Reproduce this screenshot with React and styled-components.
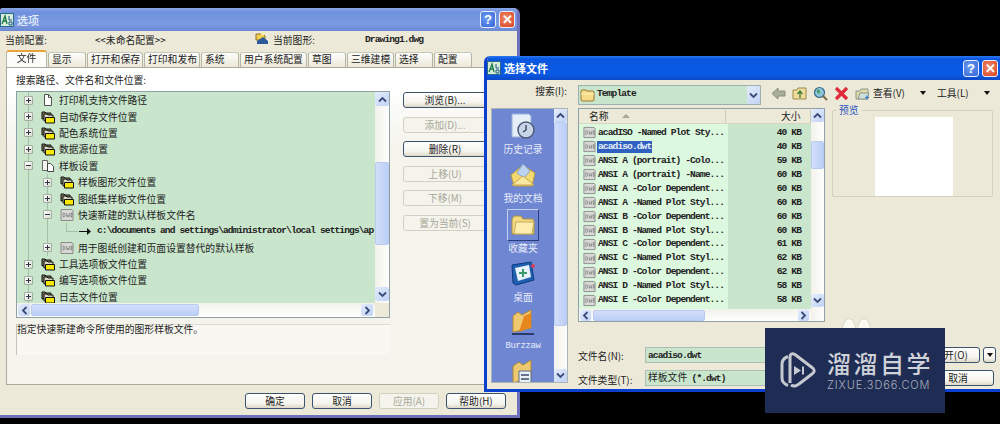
import React from 'react'
import styled, { createGlobalStyle, css } from 'styled-components'

const cjk = `"Noto Sans CJK SC", "Liberation Sans", sans-serif`
const mono = `"Liberation Mono", "Noto Sans CJK SC", monospace`

const bitmapText = css`
  font-family: ${mono};
  font-size: 9.6px;
  font-weight: 700;
  letter-spacing: -0.91px;
`

const GlobalStyle = createGlobalStyle`
  html, body { margin: 0; padding: 0; background: #000; overflow: hidden; }
  * { box-sizing: border-box; }
`

const Page = styled.div`
  position: relative;
  width: 1000px;
  height: 424px;
  background: #000;
  overflow: hidden;
  font-family: ${cjk};
  font-size: 9.8px;
  color: #222;
`
const Desktop = styled.div`
  position: absolute;
  inset: 0;
  filter: blur(0.4px);
`
const Win = styled.div`
  position: absolute;
  display: flex;
  flex-direction: column;
  left: ${p => p.$left}px;
  top: ${p => p.$top}px;
  width: ${p => p.$width}px;
  height: ${p => p.$height}px;
  background: #ece9d8;
  border: 3px solid ${p => p.$border};
  border-top: 0;
  border-radius: 6px 6px 0 0;
  overflow: hidden;
`
const TitleBar = styled.div`
  flex: none;
  height: ${p => p.$h}px;
  display: flex;
  align-items: center;
  gap: 3px;
  padding-right: ${p => p.$pr}px;
  background: ${p => p.$active
    ? 'linear-gradient(#2a7af0 0, #0a56e0 3px, #0a5ae6 18px, #0a48c8 100%)'
    : 'linear-gradient(#8aa6e8 0, #6f90dc 4px, #7c9ce2 16px, #6a88d4 100%)'};
`
const TitleText = styled.span`
  flex: 1;
  color: ${p => p.$active ? '#fff' : '#e4ecfa'};
  font-size: 11px;
  font-weight: ${p => p.$active ? 700 : 500};
`
const CapButton = styled.span`
  width: 16px;
  height: 17px;
  display: flex;
  align-items: center;
  justify-content: center;
  border: 1px solid #e8eefc;
  border-radius: 3px;
  color: #fff;
  font: 700 13px "Liberation Sans", sans-serif;
  background: ${p => p.$close
    ? 'radial-gradient(circle at 40% 40%, #f0886a, #d8431f)'
    : 'radial-gradient(circle at 40% 40%, #6c9cf0, #3465d8)'};
`

const ConfigRow = styled.div`
  flex: none;
  height: 20px;
  display: flex;
  align-items: center;
  padding: 0 0 3px 5px;
`
const Cell = styled.span`
  flex: none;
  width: ${p => p.$w}px;
  ${p => p.$mono && bitmapText}
`
const TabRow = styled.div`
  flex: none;
  display: flex;
  align-items: flex-end;
  gap: 1px;
  height: 16px;
  margin-left: 6px;
`
const Tab = styled.div`
  width: ${p => p.$w}px;
  height: ${p => p.$active ? 17 : 15}px;
  line-height: ${p => p.$active ? 12 : 13}px;
  padding-left: ${p => p.$active ? 0 : 3}px;
  text-align: ${p => p.$active ? 'center' : 'left'};
  border: 1px solid #b4b7a6;
  border-bottom: 0;
  border-top: ${p => p.$active ? '2px solid #e8a33c' : '1px solid #c8c9b8'};
  border-radius: 3px 3px 0 0;
  background: ${p => p.$active ? '#fcfcf8' : 'linear-gradient(#fdfdfb, #ece9d8)'};
  position: relative;
  z-index: ${p => p.$active ? 1 : 0};
`
const TabPane = styled.div`
  flex: none;
  height: 318px;
  margin: 0 0 0 6px;
  padding: 6px 0 0 9px;
  border: 1px solid #a8aa9c;
  background: linear-gradient(#fff 20px, #f4f3ec 80px);
`
const PaneLabel = styled.div`
  height: 13px;
  line-height: 13px;
  margin-bottom: 4px;
`
const PaneBody = styled.div`
  display: flex;
  gap: 13px;
`
const TreeColumn = styled.div`
  flex: none;
  width: 374px;
`
const TreeBox = styled.div`
  height: 227px;
  display: grid;
  grid-template-columns: 358px 15px;
  grid-template-rows: 211px 14px;
  border: 1px solid #8fa0a6;
  background: #c9e6cc;
  overflow: hidden;
`
const TreeRows = styled.div`
  overflow: hidden;
`
const TreeRow = styled.div`
  height: 16.4px;
  display: flex;
  align-items: center;
  padding-left: ${p => 7 + p.$level * 19}px;
  white-space: nowrap;
  background:
    ${p => p.$guide1 ? 'linear-gradient(#a6bfa9, #a6bfa9) no-repeat 11px 0 / 1px 100%,' : ''}
    ${p => p.$guide2 ? 'linear-gradient(#a6bfa9, #a6bfa9) no-repeat 30px 0 / 1px 100%,' : ''}
    transparent;
`
const Expander = styled.span`
  flex: none;
  width: 9px;
  height: 9px;
  margin-right: 8px;
  border: 1px solid #a2aea4;
  border-radius: 1px;
  background:
    linear-gradient(#334, #334) no-repeat center / 5px 1px,
    ${p => p.$open ? '' : 'linear-gradient(#334, #334) no-repeat center / 1px 5px,'}
    linear-gradient(135deg, #fff, #d8dccc);
`
const TreeLabel = styled.span`
  margin-left: 4px;
`
const PathRow = styled.div`
  height: 16.4px;
  display: flex;
  align-items: center;
  gap: 6px;
  padding-left: 62px;
  white-space: nowrap;
  background:
    linear-gradient(#a6bfa9, #a6bfa9) no-repeat 11px 0 / 1px 100%,
    linear-gradient(#a6bfa9, #a6bfa9) no-repeat 30px 0 / 1px 100%,
    linear-gradient(#a6bfa9, #a6bfa9) no-repeat 49px 0 / 1px 50%,
    linear-gradient(#a6bfa9, #a6bfa9) no-repeat 49px 50% / 12px 1px;
`
const MonoText = styled.span`
  ${bitmapText}
  line-height: 12px;
  color: ${p => p.$light ? '#e8eefc' : '#222'};
`
const VScroll = styled.div`
  display: flex;
  flex-direction: column;
  padding: 0 1px 0 0;
  height: 100%;
  background: linear-gradient(90deg, #f2f1ea, #fff);
`
const HScroll = styled.div`
  display: flex;
  align-items: stretch;
  background: linear-gradient(#f2f1ea, #fff);
  padding: 1px;
`
const Arrow = styled.span`
  flex: none;
  display: flex;
  align-items: center;
  justify-content: center;
  width: ${p => p.$w || 13}px;
  height: ${p => p.$h || 13}px;
  border-radius: 2px;
  background: linear-gradient(135deg, #e4ecfd, #c0d2f6);
  margin-top: ${p => p.$mt || 0}px;
  margin-left: ${p => p.$ml || 0}px;
`
const Thumb = styled.span`
  flex: none;
  display: block;
  width: ${p => p.$w ? `${p.$w}px` : '100%'};
  height: ${p => p.$h}px;
  margin-top: ${p => p.$mt || 0}px;
  margin-left: ${p => p.$ml || 0}px;
  border: 1px solid #b8caf0;
  border-radius: 2px;
  background: linear-gradient(${p => p.$w ? '180deg' : '90deg'}, #d2defb, #bccff6);
`
const Corner = styled.div`
  background: #ece9d8;
`
const DescBox = styled.div`
  height: 31px;
  margin-top: 6px;
  line-height: 9px;
  border-left: 1px solid #c4c4ba;
  border-top: 1px solid #dcdcd2;
  background: #f8f7f1;
`
const ButtonColumn = styled.div`
  flex: none;
  width: 84px;
  display: grid;
  grid-auto-rows: 16px;
  row-gap: 8.5px;
  padding-top: 1px;
`
const Btn = styled.div`
  flex: none;
  width: ${p => p.$w ? `${p.$w}px` : 'auto'};
  height: ${p => p.$h || 16}px;
  display: flex;
  align-items: center;
  justify-content: center;
  border: 1px solid ${p => p.$off ? '#d2d0c0' : '#3a5470'};
  border-radius: 3px;
  color: ${p => p.$off ? '#a8a898' : '#222'};
  background: ${p => p.$off ? '#f4f3ec' : 'linear-gradient(#fff, #f4f3ec 70%, #dcd8c6)'};
  white-space: nowrap;
`
const Footer = styled.div`
  display: flex;
  justify-content: flex-end;
  gap: 7px;
  padding: 8px 11px 0 0;
`

/* second window */
const DialogBody = styled.div`
  flex: 1;
  padding: 5px 0 0 4px;
  min-height: 0;
`
const SearchRow = styled.div`
  height: 20px;
  display: flex;
  align-items: center;
  margin-bottom: 3px;
`
const SearchLabel = styled.span`
  flex: none;
  width: 76px;
  margin: 0 11px 8px 0;
  text-align: right;
`
const Combo = styled.div`
  flex: none;
  width: 183px;
  height: 20px;
  display: flex;
  align-items: center;
  gap: 1px;
  border: 1px solid #9fb0b0;
  background: #c9e6cc;
  padding-left: 1px;
`
const ComboText = styled.span`
  flex: 1;
  display: flex;
  margin-bottom: 3px;
`
const Toolbar = styled.div`
  display: flex;
  align-items: center;
  margin: 0 0 4px 7px;
`
const ToolBtn = styled.span`
  flex: none;
  width: 21px;
  display: flex;
  justify-content: center;
`
const MenuItem = styled.span`
  flex: none;
  width: 64px;
  display: flex;
  align-items: center;
  justify-content: space-between;
  padding-right: 11px;
`
const Caret = styled.i`
  display: block;
  width: 0;
  height: 0;
  border: 3.5px solid transparent;
  border-top: 4px solid #111;
  border-bottom: 0;
`
const DialogMain = styled.div`
  display: flex;
  gap: 10px;
`
const PlacesBar = styled.div`
  flex: none;
  width: 77px;
  height: 275px;
  display: grid;
  grid-template-columns: 62px 14px;
  border: 1px solid #aab4b4;
  overflow: hidden;
`
const PlacesList = styled.div`
  background: #6f86d2;
  overflow: hidden;
  padding-top: 1px;
`
const Place = styled.div`
  height: 49.3px;
  display: flex;
  flex-direction: column;
  align-items: center;
`
const PlaceIcon = styled.div`
  width: 32px;
  height: 32px;
  display: flex;
  align-items: center;
  justify-content: center;
  border: 1px solid ${p => p.$on ? '#2c3c7c' : 'transparent'};
  border-top-color: ${p => p.$on ? '#c6d0f0' : 'transparent'};
  border-left-color: ${p => p.$on ? '#c6d0f0' : 'transparent'};
`
const PlaceLabel = styled.span`
  height: 15px;
  line-height: 15px;
  color: #e6ecfb;
  white-space: nowrap;
  ${p => p.$mono && css`
    font-family: ${mono};
    font-size: 9px;
    letter-spacing: -0.4px;
  `}
`
const RightColumn = styled.div`
  flex: none;
  width: 420px;
`
const FileArea = styled.div`
  display: flex;
  gap: 7px;
`
const FileBox = styled.div`
  flex: none;
  width: 247px;
  height: 214px;
  display: grid;
  grid-template-columns: 232px 14px;
  grid-template-rows: 1fr;
  border: 1px solid #8fa0a6;
  background: #fff;
  overflow: hidden;
`
const FilePane = styled.div`
  display: flex;
  flex-direction: column;
  min-width: 0;
`
const FileHead = styled.div`
  flex: none;
  height: 15px;
  display: flex;
  align-items: center;
  background: #ece9d8;
  border-bottom: 1px solid #d8d5c2;
`
const HeadCell = styled.span`
  flex: ${p => p.$w ? 'none' : 1};
  width: ${p => p.$w || 0}px;
  display: flex;
  align-items: center;
  gap: 13px;
  padding-left: ${p => p.$pl || 0}px;
  height: 13px;
  border-right: 1px solid #cfcbb8;
`
const SortMark = styled.i`
  display: block;
  width: 0;
  height: 0;
  border: 4px solid transparent;
  border-bottom: 4px solid #a8a698;
  border-top: 0;
`
const FileRows = styled.div`
  flex: none;
  height: 185px;
  padding-top: 2px;
  background: linear-gradient(90deg, #dcf8de 149px, #c9e6cc 149px);
`
const FileRow = styled.div`
  height: 13.95px;
  display: grid;
  grid-template-columns: 149px 1fr;
  align-items: center;
`
const NameCell = styled.div`
  display: flex;
  align-items: center;
  gap: 1px;
  padding-left: 4px;
  white-space: nowrap;
  overflow: hidden;
`
const NameText = styled.span`
  display: flex;
  padding: 0 1px;
  background: ${p => p.$selected ? '#2f62c0' : 'transparent'};
`
const SizeCell = styled.div`
  display: flex;
  justify-content: flex-end;
  padding-right: 10px;
`
const PreviewBox = styled.div`
  position: relative;
  flex: none;
  width: 161px;
  height: 87px;
  margin-top: 2px;
  padding-top: 6px;
  border: 1px solid #d4d1bf;
  border-radius: 2px;
`
const PreviewLegend = styled.span`
  position: absolute;
  left: 4px;
  top: -7px;
  padding: 0 2px;
  color: #2a55c0;
  background: #ece9d8;
  line-height: 13px;
`
const PreviewSheet = styled.div`
  width: 78px;
  height: 79px;
  margin-left: 42px;
  background: #fff;
`
const FormRow = styled.div`
  display: flex;
  align-items: center;
  height: 16px;
  margin-top: ${p => p.$mt}px;
`
const FormLabel = styled.span`
  flex: none;
  width: 67px;
  padding-top: ${p => p.$drop || 0}px;
`
const FormInput = styled.div`
  flex: none;
  width: 275px;
  height: 16px;
  line-height: 12px;
  margin-right: 2px;
  padding-left: 2px;
  border: 1px solid #aebcb4;
  background: #c9e6cc;
  white-space: pre;
`
const FormMono = styled.span`
  ${bitmapText}
`
const DropButton = styled(Btn)`
  margin-left: 3px;
`

/* watermark */
const Ears = styled.div`
  position: absolute;
  left: 842px;
  top: 318px;
  display: flex;
  gap: 1px;
`
const Ear = styled.span`
  display: block;
  width: 14px;
  height: 24px;
  border-radius: 50%;
  border: 1px solid #d8d6c8;
  background: #fbfaf2;
`
const Mark = styled.div`
  position: absolute;
  left: 765px;
  top: 328px;
  width: 180px;
  height: 85px;
  display: flex;
  align-items: center;
  gap: 11px;
  padding: 0 0 0 15px;
  background: #1f2d54;
`
const MarkText = styled.div`
  display: flex;
  flex-direction: column;
  gap: 1px;
`
const MarkTitle = styled.span`
  font-size: 24px;
  line-height: 28px;
  font-weight: 500;
  letter-spacing: 2.5px;
  color: #cfd2d8;
  white-space: nowrap;
`
const MarkUrl = styled.span`
  font: 300 11px/14px Inter, sans-serif;
  letter-spacing: 0.9px;
  color: #a9aebb;
  white-space: nowrap;
`

const AppIcon = () => (
  <svg width="14" height="14" viewBox="0 0 14 14">
    <rect x=".5" y=".5" width="13" height="13" fill="#d8ecd8" stroke="#2a6a8a" />
    <path d="M2 11 5 3l2 8M3 8h3" fill="none" stroke="#1a7a4a" strokeWidth="1.3" />
    <path d="M9 3v4h3M9 9h3v3H9z" fill="none" stroke="#1a5a8a" />
  </svg>
)
const TwinFolder = () => (
  <svg width="14" height="14" viewBox="0 0 14 14" style={{ flex: 'none' }}>
    <path d="M1 9V2h3l1 1h5v5z" fill="#7a7a60" stroke="#111" />
    <path d="M3 11V4h3l1 1h5v5z" fill="#d8d8c0" stroke="#111" />
    <path d="M4.500 13V7.500h9V13z" fill="#f8e800" stroke="#111" />
  </svg>
)
const PageGlyph = () => (
  <svg width="14" height="14" viewBox="0 0 14 14" style={{ flex: 'none' }}>
    <path d="M3.500 1.500h4l3 3v8h-7z" fill="#fff" stroke="#555" />
    <path d="M7.500 1.500v3h3" fill="none" stroke="#555" />
  </svg>
)
const StackGlyph = () => (
  <svg width="14" height="14" viewBox="0 0 14 14" style={{ flex: 'none' }}>
    <path d="M1.500 1.500h5v10h-5z" fill="#f4f4f0" stroke="#666" />
    <path d="M6.500 4.500h3l3 3v5h-6z" fill="#fff" stroke="#444" />
  </svg>
)
const DwgGlyph = ({ size = 14 }) => (
  <svg width={size} height={size} viewBox="0 0 14 14" style={{ flex: 'none' }}>
    <path d="M1 1.500h11l1 1v10H1z" fill="#d8d8d4" stroke="#8a8a8a" />
    <path d="M3 5v4h1l1-1V6L4 5zM6.500 5l.5 4 1-2 1 2 .5-4M11 5h1v4h-1z" fill="none" stroke="#777" strokeWidth=".7" />
  </svg>
)
const PathArrow = () => (
  <svg width="12" height="9" viewBox="0 0 12 9" style={{ flex: 'none' }}>
    <path d="M0 4h8V1l4 3.500L8 8V5H0z" fill="#111" />
  </svg>
)
const OpenFolder = () => (
  <svg width="16" height="14" viewBox="0 0 16 14" style={{ flex: 'none' }}>
    <path d="M1 12V3l1-1h4l1 1h6l1 1v8l-1 1H2z" fill="#f6dc88" stroke="#9a7a30" />
    <path d="M1 6h13" stroke="#fff2c0" />
  </svg>
)
const Chevron = ({ dir = 'up', color = '#3a4a7a' }) => {
  const rotate = { up: 0, down: 180, left: 270, right: 90 }[dir]
  return (
    <svg width="9" height="7" viewBox="0 0 9 7" style={{ transform: `rotate(${rotate}deg)` }}>
      <path d="M1 5.500 4.500 2 8 5.500" fill="none" stroke={color} strokeWidth="1.800" />
    </svg>
  )
}
const BackIcon = () => (
  <svg width="15" height="13" viewBox="0 0 15 13">
    <path d="M1 6.500 7 1v3h7v5H7v3z" fill="#a8ac98" stroke="#8a8e80" />
  </svg>
)
const UpIcon = () => (
  <svg width="15" height="15" viewBox="0 0 15 15">
    <path d="M1 13V4h4l1-2h8v11z" fill="#f0dc98" stroke="#9a8a50" />
    <path d="M8 12V6M5.500 8 8 5l2.500 3" fill="none" stroke="#3a7a3a" strokeWidth="1.300" />
  </svg>
)
const GlobeIcon = () => (
  <svg width="15" height="15" viewBox="0 0 15 15">
    <circle cx="6.500" cy="6.500" r="5" fill="#8cc4d8" stroke="#3a6a8a" strokeWidth="1.200" />
    <path d="M4 4c2-1 3 0 3 2S5 8 4 6z" fill="#4a9a6a" />
    <path d="m10 10 4 4" stroke="#7a6a4a" strokeWidth="2" />
  </svg>
)
const DeleteIcon = () => (
  <svg width="15" height="15" viewBox="0 0 15 15">
    <path d="M2 2l11 11M13 2 2 13" stroke="#e02a3a" strokeWidth="3.200" />
  </svg>
)
const NewFolderIcon = () => (
  <svg width="15" height="15" viewBox="0 0 15 15">
    <path d="M1 13V5h4l1-2h7v10z" fill="#e2d8a8" stroke="#8a9a8a" />
    <path d="M3 13 5 7h9l-2 6z" fill="#cfe0d8" stroke="#8a9a8a" />
    <path d="M12 9.500v4M10 11.500h4" stroke="#3a7ad8" strokeWidth="1.200" />
  </svg>
)
const DrawingIcon = () => (
  <svg width="14" height="15" viewBox="0 0 14 15">
    <path d="M1 3h7l2 2v4H1z" fill="#f4d050" stroke="#8a7020" />
    <path d="M2 10 8 6l5 4v3H2z" fill="#2a5a9a" />
    <path d="M6 1h4v3H6z" fill="#f8f0b0" />
  </svg>
)
const HistoryIcon = () => (
  <svg width="28" height="30" viewBox="0 0 28 30">
    <path d="M3 3h17l2 2v21H3z" fill="#e6eef8" stroke="#9ab0d8" />
    <circle cx="17" cy="19" r="8" fill="#c8d6e8" stroke="#4a5a7a" strokeWidth="1.500" />
    <path d="M17 14v5l-3 2" fill="none" stroke="#2a3a5a" strokeWidth="1.300" />
  </svg>
)
const MailIcon = () => (
  <svg width="28" height="28" viewBox="0 0 28 28">
    <path d="M2 14 14 4l12 8-3 13H5z" fill="#f4d870" stroke="#b89a40" />
    <path d="M8 12 14 3l7 7-6 7z" fill="#bcd4f0" stroke="#8aa4d0" />
    <path d="M3 24 14 15l11 9z" fill="#f8e8a0" stroke="#c8a850" />
  </svg>
)
const FolderIcon = () => (
  <svg width="26" height="24" viewBox="0 0 26 24">
    <path d="M2 21V6l2-3h7l2 3h10l1 2v13z" fill="#f2d880" stroke="#a89048" />
    <path d="M4 21 6 9h18l-2 12z" fill="#fdeeb0" stroke="#c8a858" />
  </svg>
)
const DesktopIcon = () => (
  <svg width="28" height="28" viewBox="0 0 28 28">
    <path d="M3 5 22 2l3 18-18 5-3-2z" fill="#1f5fb0" stroke="#0a3a80" />
    <path d="M6 8 20 5l2 12-13 4z" fill="#e8f2fc" />
    <path d="M10 13h8M14 9v8" stroke="#3a9a6a" strokeWidth="2" />
    <circle cx="24" cy="6" r="2" fill="#d8405a" />
  </svg>
)
const BurzzawIcon = () => (
  <svg width="28" height="30" viewBox="0 0 28 30">
    <path d="M4 24V8l5-4 4 3 9-5v18z" fill="#f0c870" stroke="#b88830" />
    <path d="M10 24 15 8l7-3v14z" fill="#e8861e" />
    <path d="M3 25h22v2H3z" fill="#2a3a6a" />
  </svg>
)
const ScriptIcon = () => (
  <svg width="28" height="30" viewBox="0 0 28 30">
    <path d="M4 26V9l6-4 4 3 8-5v18z" fill="#ecc870" stroke="#a88838" />
    <path d="M10 14h12v12H10z" fill="#e8f0f8" stroke="#5a6a8a" />
    <path d="M12 18h8M12 22h8" stroke="#3a4a6a" strokeWidth="1.500" />
  </svg>
)
const MarkLogo = () => (
  <svg width="36" height="40" viewBox="0 0 36 40" style={{ flex: 'none' }}>
    <path d="M8 5.500C4 7 2 9 2 13v14c0 4 2 6 6 7.500" fill="none" stroke="#c6c9d0" strokeWidth="3" />
    <path d="M10 32V6c0-3 2-4 5-2.500l17 13c3 2 3 4.500 0 6.500L19 33c-3 1.800-5 3-8 1" fill="none" stroke="#c6c9d0" strokeWidth="3" strokeLinejoin="round" />
    <path d="M14 15v9l7-4.500z" fill="#c6c9d0" />
    <path d="M23 15.500v8" stroke="#c6c9d0" strokeWidth="2" />
  </svg>
)

const tabs = [
  ['文件', 41, true], ['显示', 38], ['打开和保存', 56], ['打印和发布', 56], ['系统', 38],
  ['用户系统配置', 67], ['草图', 38], ['三维建模', 47], ['选择', 38], ['配置', 38],
]
const treeTop = [
  ['打印机支持文件路径', PageGlyph], ['自动保存文件位置', TwinFolder],
  ['配色系统位置', TwinFolder], ['数据源位置', TwinFolder],
]
const treeBottom = ['工具选项板文件位置', '编写选项板文件位置', '日志文件位置']
const sideButtons = [
  ['浏览(B)...'], ['添加(D)...', true], ['删除(R)'], ['上移(U)', true], ['下移(M)', true], ['置为当前(S)', true],
]
const files = [
  ['acadISO -Named Plot Sty...', 40], ['acadiso.dwt', 40], ['ANSI A (portrait) -Colo...', 59],
  ['ANSI A (portrait) -Name...', 60], ['ANSI A -Color Dependent...', 60], ['ANSI A -Named Plot Styl...', 60],
  ['ANSI B -Color Dependent...', 60], ['ANSI B -Named Plot Styl...', 60], ['ANSI C -Color Dependent...', 61],
  ['ANSI C -Named Plot Styl...', 62], ['ANSI D -Color Dependent...', 62], ['ANSI D -Named Plot Styl...', 58],
  ['ANSI E -Color Dependent...', 58],
]
const places = [
  ['历史记录', HistoryIcon], ['我的文档', MailIcon], ['收藏夹', FolderIcon, true],
  ['桌面', DesktopIcon], ['Burzzaw', BurzzawIcon], ['', ScriptIcon],
]

function OptionsWindow() {
  return (
    <Win $left={-3} $top={8} $width={523} $height={410} $border="#6f70bc">
      <TitleBar $h={23} $pr={2}>
        <AppIcon />
        <TitleText>选项</TitleText>
        <CapButton>?</CapButton>
        <CapButton $close>✕</CapButton>
      </TitleBar>
      <ConfigRow>
        <Cell $w={90}>当前配置:</Cell>
        <Cell $w={160}>&lt;&lt;未命名配置&gt;&gt;</Cell>
        <Cell $w={18}><DrawingIcon /></Cell>
        <Cell $w={92}>当前图形:</Cell>
        <Cell $w={70} $mono>Drawing1.dwg</Cell>
      </ConfigRow>
      <TabRow>
        {tabs.map(([t, w, active]) => <Tab key={t} $w={w} $active={active}>{t}</Tab>)}
      </TabRow>
      <TabPane>
        <PaneLabel>搜索路径、文件名和文件位置:</PaneLabel>
        <PaneBody>
          <TreeColumn>
            <TreeBox>
              <TreeRows>
                {treeTop.map(([t, Icon]) => (
                  <TreeRow key={t} $level={0} $guide1>
                    <Expander /><Icon /><TreeLabel>{t}</TreeLabel>
                  </TreeRow>
                ))}
                <TreeRow $level={0} $guide1>
                  <Expander $open /><StackGlyph /><TreeLabel>样板设置</TreeLabel>
                </TreeRow>
                <TreeRow $level={1} $guide1 $guide2>
                  <Expander /><TwinFolder /><TreeLabel>样板图形文件位置</TreeLabel>
                </TreeRow>
                <TreeRow $level={1} $guide1 $guide2>
                  <Expander /><TwinFolder /><TreeLabel>图纸集样板文件位置</TreeLabel>
                </TreeRow>
                <TreeRow $level={1} $guide1 $guide2>
                  <Expander $open /><DwgGlyph /><TreeLabel>快速新建的默认样板文件名</TreeLabel>
                </TreeRow>
                <PathRow>
                  <PathArrow />
                  <MonoText>c:\documents and settings\administrator\local settings\ap</MonoText>
                </PathRow>
                <TreeRow $level={1} $guide1 $guide2>
                  <Expander /><DwgGlyph /><TreeLabel>用于图纸创建和页面设置替代的默认样板</TreeLabel>
                </TreeRow>
                {treeBottom.map(t => (
                  <TreeRow key={t} $level={0} $guide1>
                    <Expander /><TwinFolder /><TreeLabel>{t}</TreeLabel>
                  </TreeRow>
                ))}
              </TreeRows>
              <VScroll>
                <Arrow $w={14} $h={14}><Chevron /></Arrow>
                <Thumb $mt={56} $h={83} />
                <Arrow $w={14} $h={14} $mt={42}><Chevron dir="down" /></Arrow>
              </VScroll>
              <HScroll>
                <Arrow $w={12} $h={12}><Chevron dir="left" /></Arrow>
                <Thumb $w={168} $h={12} $ml={1} />
                <Arrow $w={12} $h={12} $ml={162}><Chevron dir="right" /></Arrow>
              </HScroll>
              <Corner />
            </TreeBox>
            <DescBox>指定快速新建命令所使用的图形样板文件。</DescBox>
          </TreeColumn>
          <ButtonColumn>
            {sideButtons.map(([t, off]) => <Btn key={t} $off={off}>{t}</Btn>)}
          </ButtonColumn>
        </PaneBody>
      </TabPane>
      <Footer>
        <Btn $w={60}>确定</Btn>
        <Btn $w={60}>取消</Btn>
        <Btn $w={60} $off>应用(A)</Btn>
        <Btn $w={60}>帮助(H)</Btn>
      </Footer>
    </Win>
  )
}

function FileDialog() {
  return (
    <Win $left={484} $top={56} $width={520} $height={336} $border="#0b3fd0">
      <TitleBar $h={24} $pr={3} $active>
        <AppIcon />
        <TitleText $active>选择文件</TitleText>
        <CapButton>?</CapButton>
        <CapButton $close>✕</CapButton>
      </TitleBar>
      <DialogBody>
        <SearchRow>
          <SearchLabel>搜索(I):</SearchLabel>
          <Combo>
            <OpenFolder />
            <ComboText><MonoText>Template</MonoText></ComboText>
            <Arrow $w={13} $h={18}><Chevron dir="down" /></Arrow>
          </Combo>
          <Toolbar>
            <ToolBtn><BackIcon /></ToolBtn>
            <ToolBtn><UpIcon /></ToolBtn>
            <ToolBtn><GlobeIcon /></ToolBtn>
            <ToolBtn><DeleteIcon /></ToolBtn>
            <ToolBtn><NewFolderIcon /></ToolBtn>
            <MenuItem>查看(V)<Caret /></MenuItem>
            <MenuItem>工具(L)<Caret /></MenuItem>
          </Toolbar>
        </SearchRow>
        <DialogMain>
          <PlacesBar>
            <PlacesList>
              {places.map(([t, Icon, on]) => (
                <Place key={t || 'script'}>
                  <PlaceIcon $on={on}><Icon /></PlaceIcon>
                  <PlaceLabel $mono={t === 'Burzzaw'}>{t}</PlaceLabel>
                </Place>
              ))}
            </PlacesList>
            <VScroll>
              <Arrow $w={13} $h={13}><Chevron /></Arrow>
              <Thumb $h={204} />
              <Arrow $w={13} $h={13} $mt={43}><Chevron dir="down" /></Arrow>
            </VScroll>
          </PlacesBar>
          <RightColumn>
            <FileArea>
              <FileBox>
                <FilePane>
                  <FileHead>
                    <HeadCell $w={147} $pl={10}>名称<SortMark /></HeadCell>
                    <HeadCell $pl={55}>大小</HeadCell>
                  </FileHead>
                  <FileRows>
                    {files.map(([name, size], i) => (
                      <FileRow key={name}>
                        <NameCell>
                          <DwgGlyph size={13} />
                          <NameText $selected={i === 1}><MonoText $light={i === 1}>{name}</MonoText></NameText>
                        </NameCell>
                        <SizeCell><MonoText>{size} KB</MonoText></SizeCell>
                      </FileRow>
                    ))}
                  </FileRows>
                  <HScroll>
                    <Arrow $w={11} $h={11}><Chevron dir="left" /></Arrow>
                    <Thumb $w={112} $h={11} $ml={2} />
                    <Arrow $w={11} $h={11} $ml={93}><Chevron dir="right" /></Arrow>
                  </HScroll>
                </FilePane>
                <VScroll>
                  <Arrow $w={13} $h={13}><Chevron /></Arrow>
                  <Thumb $mt={19} $h={28} />
                  <Arrow $w={13} $h={13} $mt={125}><Chevron dir="down" /></Arrow>
                </VScroll>
              </FileBox>
              <PreviewBox>
                <PreviewLegend>预览</PreviewLegend>
                <PreviewSheet />
              </PreviewBox>
            </FileArea>
            <FormRow $mt={25}>
              <FormLabel $drop={1}>文件名(N):</FormLabel>
              <FormInput><FormMono>acadiso.dwt</FormMono></FormInput>
              <Btn $w={58}>打开(O)</Btn>
              <DropButton $w={13}><Caret /></DropButton>
            </FormRow>
            <FormRow $mt={7}>
              <FormLabel $drop={3}>文件类型(T):</FormLabel>
              <FormInput>样板文件  <FormMono>(*.dwt)</FormMono></FormInput>
              <Btn $w={72}>取消</Btn>
            </FormRow>
          </RightColumn>
        </DialogMain>
      </DialogBody>
    </Win>
  )
}

export default function App() {
  return (
    <Page>
      <GlobalStyle />
      <Desktop>
        <OptionsWindow />
        <FileDialog />
        <Ears><Ear /><Ear /></Ears>
      </Desktop>
      <Mark>
        <MarkLogo />
        <MarkText>
          <MarkTitle>溜溜自学</MarkTitle>
          <MarkUrl>ZIXUE.3D66.COM</MarkUrl>
        </MarkText>
      </Mark>
    </Page>
  )
}
